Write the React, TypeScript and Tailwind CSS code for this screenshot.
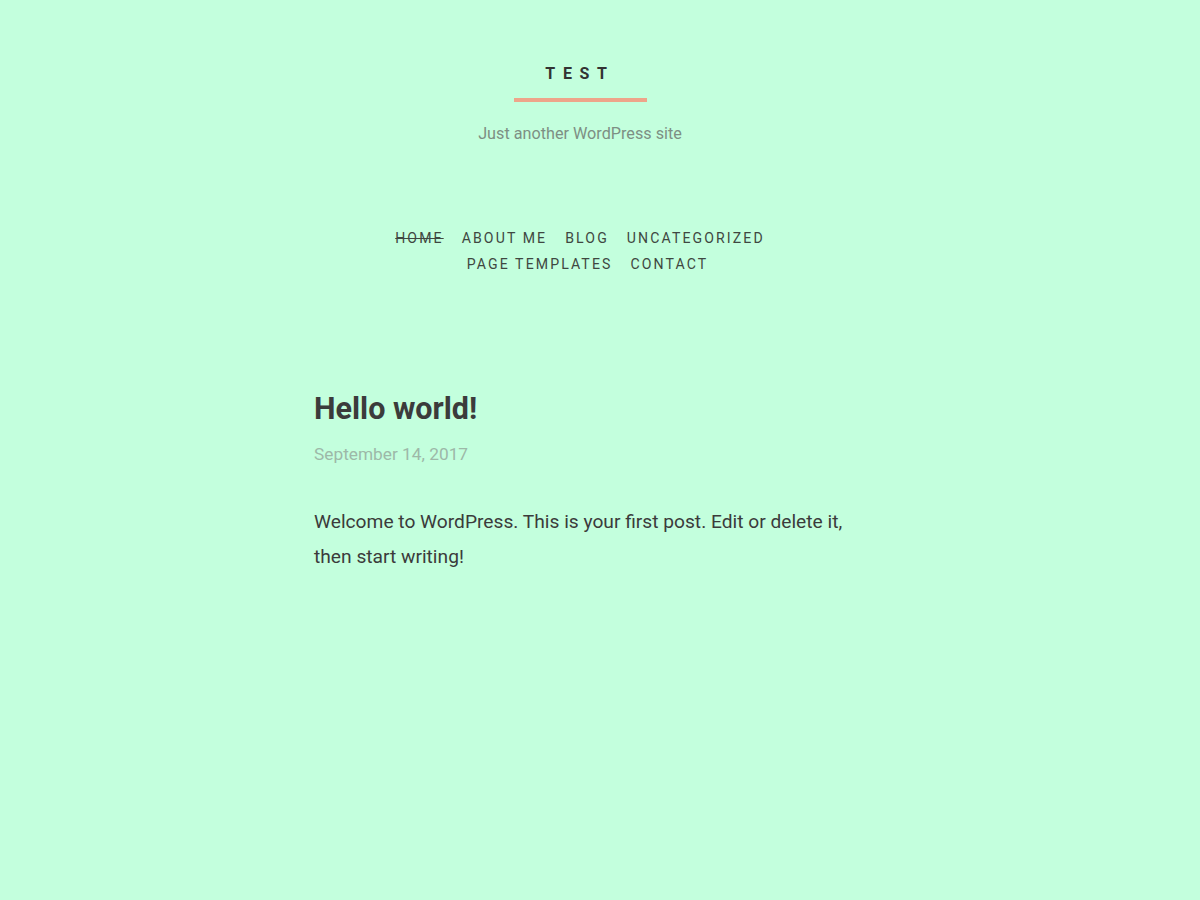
import React from 'react';

const navItems = ['Home', 'About Me', 'Blog', 'Uncategorized', 'Page Templates', 'Contact'];

export default function App() {
  return (
    <div className="min-h-screen bg-[#c3ffdd] font-['Roboto',sans-serif] text-[#3b3b3b]">
      <div className="w-[1160px]">
        {/* Site header */}
        <header className="flex flex-col items-center pt-[63px]">
          <h1 className="text-[16px] font-bold leading-[22px] tracking-[0.48em] text-[#333]">TEST</h1>
          <div className="mt-[13px] h-[4px] w-[133px] bg-[#eea58a]" />
          <p className="mt-[20px] text-[16.2px] leading-[24px] text-[#7d8f84]">Just another WordPress site</p>
        </header>

        {/* Menu */}
        <nav className="mx-auto mt-[79px] flex w-[420px] flex-wrap justify-center gap-x-[18px] text-[14.1px] uppercase leading-[26px] tracking-[2.1px] text-[#3f4741]">
          {navItems.map((item, i) => (
            <a
              key={item}
              href="#"
              className={i === 0 ? 'line-through' : i === 4 ? 'ml-[15px]' : ''}
            >
              {item}
            </a>
          ))}
        </nav>

        {/* Post */}
        <main className="mx-auto mt-[114px] w-[532px]">
          <h2 className="text-[30.5px] font-bold leading-[36px] text-[#3b3b3b]">Hello world!</h2>
          <div className="mt-[15px] text-[17.3px] leading-[24px] text-[#9db8a8]">September 14, 2017</div>
          <p className="mt-[38px] text-[19.2px] leading-[35px] text-[#3b3b3b]">
            Welcome to WordPress. This is your first post. Edit or delete it, then start writing!
          </p>
        </main>
      </div>
    </div>
  );
}
